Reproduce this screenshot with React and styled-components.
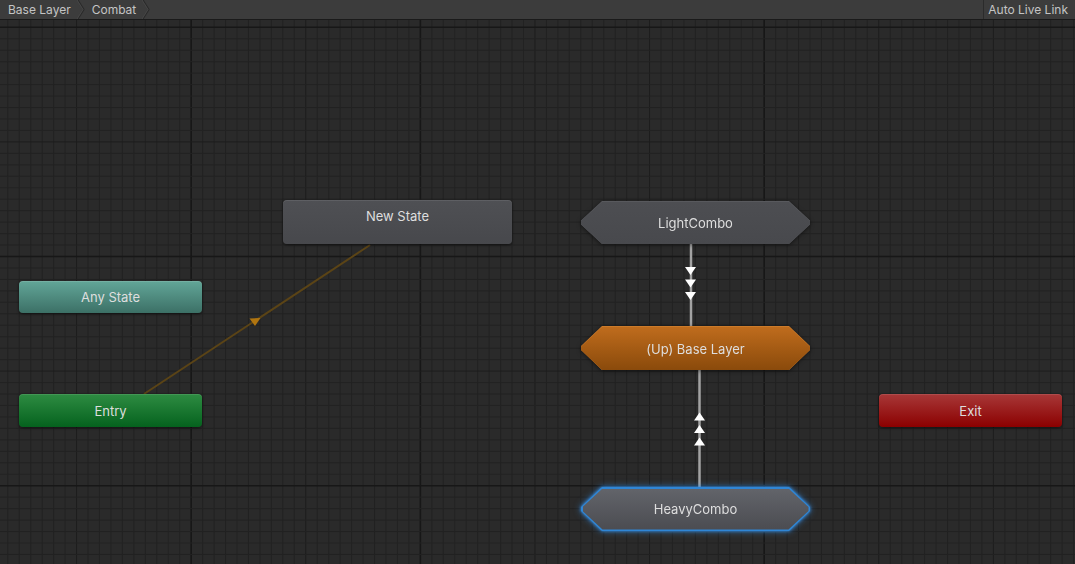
import React from "react";
import styled, { createGlobalStyle } from "styled-components";

const GlobalStyle = createGlobalStyle`
  html, body {
    margin: 0;
    padding: 0;
    background: #2a2a2a;
    overflow: hidden;
  }
  #root {
    width: 1075px;
    height: 564px;
  }
`;

// Grid constants (canvas space, canvas starts under the 20px toolbar)
const STEP = 11.46;
const CANVAS_W = 1075;
const CANVAS_H = 544;
const DARK_COLUMNS = [16, 36, 66];

const tones = {
  grey: {
    bg: "linear-gradient(#4f5054, #47484c)",
    edge: "rgba(255,255,255,0.09)",
  },
  teal: {
    bg: "linear-gradient(#62a698, #3c7066)",
    edge: "rgba(255,255,255,0.12)",
  },
  green: {
    bg: "linear-gradient(#2e8c42, #05621e)",
    edge: "rgba(255,255,255,0.1)",
  },
  red: {
    bg: "linear-gradient(#a83838, #8b0000)",
    edge: "rgba(255,255,255,0.1)",
  },
};

const hexTones = {
  grey: {
    rim: "#58595d",
    fill: "linear-gradient(#4d4e52, #48494d)",
  },
  orange: {
    rim: "#cc7b2a",
    fill: "linear-gradient(#bf6c1d, #8a4a0b)",
  },
  selected: {
    rim: "#2f86d6",
    fill: "linear-gradient(#62646a, #4b4c51)",
  },
};

const Window = styled.div`
  width: 1075px;
  height: 564px;
  display: flex;
  flex-direction: column;
  font-family: Inter, "Noto Sans", sans-serif;
  background: #2a2a2a;
`;

const Toolbar = styled.div`
  flex: none;
  height: 19px;
  display: flex;
  align-items: stretch;
  background: #3c3c3c;
  border-bottom: 1px solid #1a1a1a;
  font-size: 12px;
  color: #c4c4c4;
`;

const Crumb = styled.div`
  display: flex;
  align-items: center;
  gap: 6px;
  padding-left: ${(p) => (p.$first ? 8 : 7)}px;
  white-space: nowrap;
`;

const Chevron = styled.svg`
  display: block;
  width: 8px;
  height: 19px;
`;

const Spacer = styled.div`
  flex: 1;
`;

const LiveLink = styled.div`
  display: flex;
  align-items: center;
  padding: 0 7px 0 4px;
  border-left: 1px solid #2b2b2b;
  white-space: nowrap;
`;

const Canvas = styled.div`
  position: relative;
  flex: 1;
  overflow: hidden;
`;

const Layer = styled.svg`
  position: absolute;
  left: 0;
  top: 0;
  width: ${CANVAS_W}px;
  height: ${CANVAS_H}px;
`;

const RectNode = styled.div`
  position: absolute;
  left: ${(p) => p.$x}px;
  top: ${(p) => p.$y}px;
  width: ${(p) => p.$w}px;
  height: ${(p) => p.$h}px;
  box-sizing: border-box;
  display: flex;
  justify-content: center;
  align-items: ${(p) => (p.$textTop ? "flex-start" : "center")};
  padding-top: ${(p) => (p.$textTop ? 8 : 0)}px;
  border-radius: 4px;
  background: ${(p) => tones[p.$tone].bg};
  box-shadow: inset 0 1px 0 ${(p) => tones[p.$tone].edge},
    0 1px 3px rgba(0, 0, 0, 0.55);
  font-size: 13px;
  color: #dedede;
`;

const HexWrap = styled.div`
  position: absolute;
  left: ${(p) => p.$x}px;
  top: ${(p) => p.$y}px;
  width: 229px;
  height: ${(p) => p.$h}px;
  filter: ${(p) =>
    p.$glow
      ? "drop-shadow(0 0 1.5px #3a92e6) drop-shadow(0 0 3px rgba(50,140,230,0.6))"
      : "drop-shadow(0 1px 2px rgba(0,0,0,0.5))"};
`;

const hexClip = (cut) =>
  `polygon(${cut}px 0, calc(100% - ${cut}px) 0, 100% calc(50% - 2px), 100% calc(50% + 2px), calc(100% - ${cut}px) 100%, ${cut}px 100%, 0 calc(50% + 2px), 0 calc(50% - 2px))`;

const HexRim = styled.div`
  width: 100%;
  height: 100%;
  box-sizing: border-box;
  display: flex;
  padding: ${(p) => (p.$glow ? "1.5px" : "1px 0 0")};
  background: ${(p) => hexTones[p.$tone].rim};
  clip-path: ${hexClip(21)};
`;

const HexBody = styled.div`
  flex: 1;
  display: flex;
  align-items: center;
  justify-content: center;
  background: ${(p) => hexTones[p.$tone].fill};
  clip-path: ${(p) => hexClip(p.$glow ? 20 : 21)};
  font-size: 13px;
  color: #dedede;
`;

const Grid = () => {
  const lines = [];
  for (let i = 0; 7.8 + i * STEP < CANVAS_W; i++) {
    const x = 7.8 + i * STEP;
    const dark = DARK_COLUMNS.includes(i);
    const medium = (i - 6) % 10 === 0;
    lines.push(
      <line
        key={"v" + i}
        x1={x}
        x2={x}
        y1={0}
        y2={CANVAS_H}
        stroke={dark ? "#171717" : medium ? "#1d1d1d" : "#222222"}
        strokeWidth={dark ? 1.6 : 1}
      />
    );
  }
  for (let j = 0; 7.3 + j * STEP < CANVAS_H; j++) {
    const y = 7.3 + j * STEP;
    const dark = j % 20 === 0;
    const medium = j % 10 === 0;
    lines.push(
      <line
        key={"h" + j}
        x1={0}
        x2={CANVAS_W}
        y1={y}
        y2={y}
        stroke={dark ? "#171717" : medium ? "#1d1d1d" : "#222222"}
        strokeWidth={dark ? 1.6 : 1}
      />
    );
  }
  return <Layer>{lines}</Layer>;
};

const arrowDown = (cx, top) =>
  `${cx - 5.5},${top} ${cx + 5.5},${top} ${cx},${top + 8}`;
const arrowUp = (cx, top) =>
  `${cx},${top} ${cx + 5.5},${top + 8} ${cx - 5.5},${top + 8}`;

const Transitions = () => (
  <Layer>
    {/* Entry -> New State */}
    <line x1={370} y1={225} x2={144} y2={374} stroke="#5b4416" strokeWidth={2} />
    <polygon points="249.5,298.5 260.5,298 255,306" fill="#b07510" />

    {/* LightCombo -> (Up) Base Layer */}
    <line x1={691} y1={224} x2={691} y2={306} stroke="#a3a3a3" strokeWidth={2.5} />
    {[247, 259.5, 272].map((t) => (
      <polygon key={t} points={arrowDown(690.5, t)} fill="#ffffff" />
    ))}

    {/* HeavyCombo -> (Up) Base Layer */}
    <line x1={699.5} y1={350} x2={699.5} y2={467} stroke="#a3a3a3" strokeWidth={2.5} />
    {[392.5, 405, 417.5].map((t) => (
      <polygon key={t} points={arrowUp(699.5, t)} fill="#ffffff" />
    ))}
  </Layer>
);

const HexState = ({ x, y, h, tone, glow, children }) => (
  <HexWrap $x={x} $y={y} $h={h} $glow={glow}>
    <HexRim $tone={tone} $glow={glow}>
      <HexBody $tone={tone} $glow={glow}>
        {children}
      </HexBody>
    </HexRim>
  </HexWrap>
);

const ChevronIcon = () => (
  <Chevron viewBox="0 0 8 19">
    <polyline points="1,0 7,9.5 1,19" fill="none" stroke="#2a2a2a" strokeWidth="1.2" />
    <polyline points="0,0 6,9.5 0,19" fill="none" stroke="#4a4a4a" strokeWidth="0.8" />
  </Chevron>
);

export default function App() {
  return (
    <>
      <GlobalStyle />
      <Window>
        <Toolbar>
          <Crumb $first>
            Base Layer
            <ChevronIcon />
          </Crumb>
          <Crumb>
            Combat
            <ChevronIcon />
          </Crumb>
          <Spacer />
          <LiveLink>Auto Live Link</LiveLink>
        </Toolbar>

        <Canvas>
          <Grid />
          <Transitions />

          <RectNode $x={283} $y={180} $w={229} $h={44} $tone="grey" $textTop>
            New State
          </RectNode>
          <RectNode $x={19} $y={261} $w={183} $h={32} $tone="teal">
            Any State
          </RectNode>
          <RectNode $x={19} $y={374} $w={183} $h={33} $tone="green">
            Entry
          </RectNode>
          <RectNode $x={879} $y={374} $w={183} $h={33} $tone="red">
            Exit
          </RectNode>

          <HexState x={581} y={181} h={43} tone="grey">
            LightCombo
          </HexState>
          <HexState x={581} y={306} h={44} tone="orange">
            (Up) Base Layer
          </HexState>
          <HexState x={581} y={467} h={44} tone="selected" glow>
            HeavyCombo
          </HexState>
        </Canvas>
      </Window>
    </>
  );
}
